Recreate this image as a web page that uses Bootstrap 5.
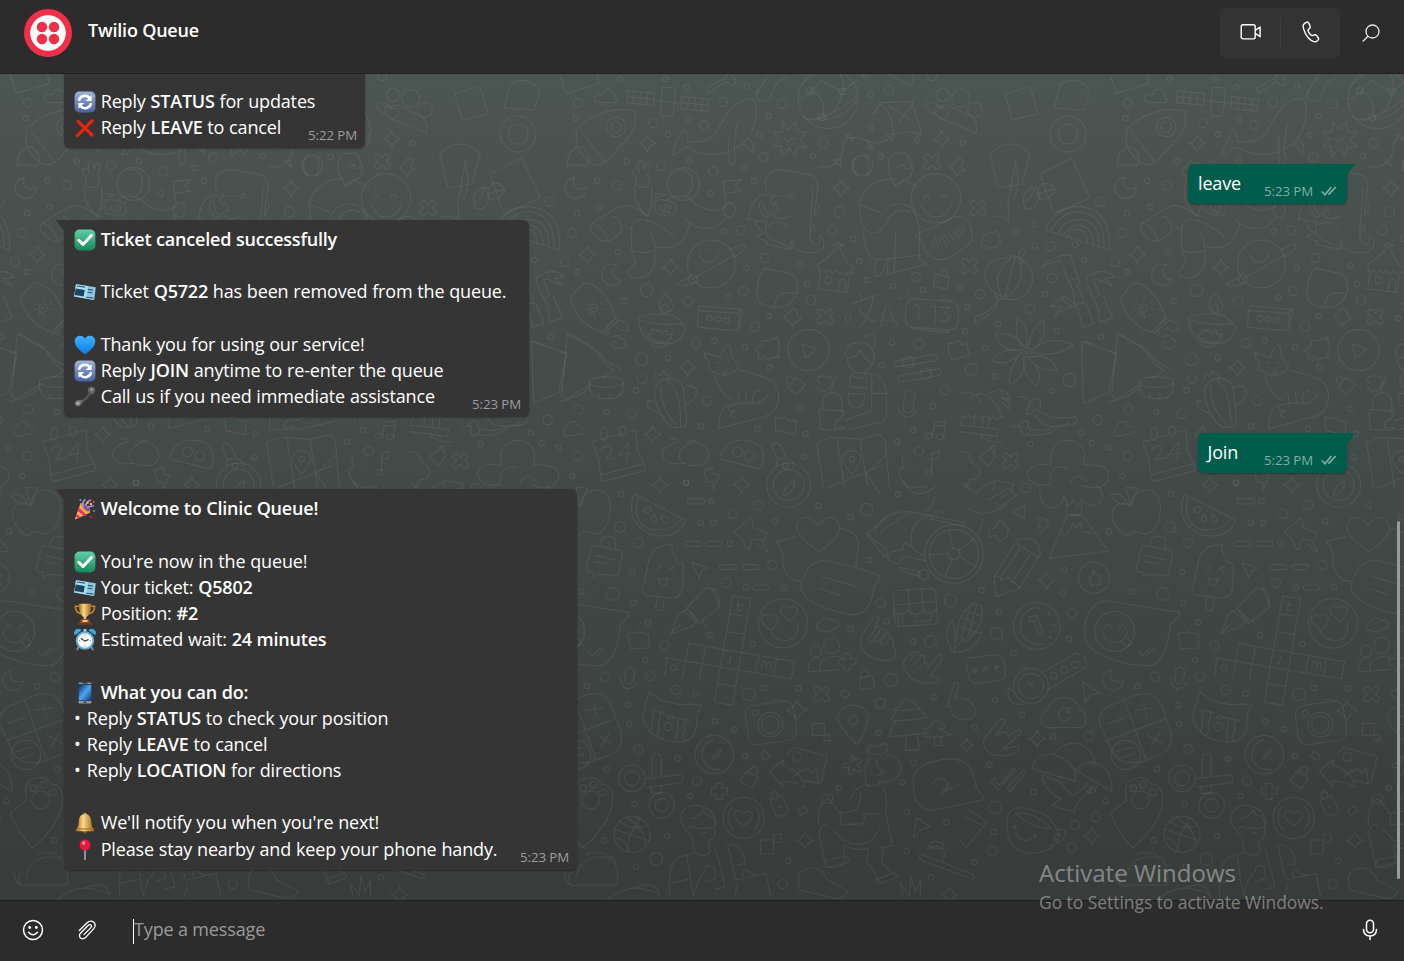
<!DOCTYPE html>
<html lang="en">
<head>
<meta charset="utf-8">
<meta name="viewport" content="width=device-width, initial-scale=1">
<title>Twilio Queue</title>
<link href="https://cdn.jsdelivr.net/npm/bootstrap@5.3.0/dist/css/bootstrap.min.css" rel="stylesheet">
<style>
  body { background: #2c2c2c; color: #fff; font-family: "Open Sans", "Noto Sans", sans-serif; font-size: 18px; }
  .topbar { height: 74px; background: #2c2c2c; border-bottom: 1px solid #202020; padding: 8px 24px 0; }
  .topbar svg, .composer svg { display: block; }
  .peer { font-weight: 600; font-size: 18px; letter-spacing: -.2px; line-height: 24px; margin: 10px 0 0 16px; }
  .calls { width: 120px; height: 50px; background: #333; border-radius: 6px; border: 1px solid #363636; }
  .calls > span { width: 59px; height: 30px; }
  .calls > span + span { border-left: 1px solid #3e3e3e; }
  .calls svg { margin: -2px 0 0 1px; }
  .find { margin: 16px 0 0 22px; }
  .defs { width: 0; height: 0; }
  .chat { min-height: 0; background: linear-gradient(#4b5551 0, #49524e 12%, #454d4a 35%, #414946 55%, #3c423f 78%, #383c3b 100%); }
  .wallpaper { inset: 0; width: 100%; height: 100%; fill: none; stroke: #fff; stroke-opacity: .07; stroke-width: 3.5; stroke-linecap: round; stroke-linejoin: round; }
  .thread { padding: 0 57px 30.2px 64px; gap: 15.8px; }
  .bubble { background: #353535; border-radius: 6px; padding: 6px 8px 8px 10px; line-height: 26.2px; letter-spacing: -.15px; word-spacing: .3px; white-space: nowrap; box-shadow: 0 1px 2px rgba(0,0,0,.3); flex: none; }
  .bubble b { font-weight: 600; letter-spacing: -.21px; }
  .bubble p { margin: 0; height: 26.2px; }
  .bubble p svg { width: 22px; height: 22px; vertical-align: -5px; margin: 0 4.700px 0 0; overflow: visible; }
  .dot { margin-right: 1.400px; }
  .stamp { right: 8px; bottom: 4px; font-size: 13.3px; line-height: 18px; letter-spacing: -.1px; word-spacing: 0; color: #9c9c9c; }
  .tail::before { content: ""; position: absolute; left: -8px; top: 0; width: 14px; height: 12px; background: inherit; clip-path: polygon(0 0, 100% 0, 100% 100%, 8px 11px); }
  .mine { background: #005c4b; align-self: flex-end; }
  .mine::before { left: auto; right: -8px; clip-path: polygon(0 0, 100% 0, 6px 11px, 0 100%); }
  .mine .stamp { color: #80ada5; right: 10px; }
  .w-a { width: 301px; } .w-b { width: 159px; } .w-c { width: 465px; } .w-d { width: 149.5px; } .w-e { width: 513px; }
  .scroller { right: 4px; top: 447px; width: 3px; height: 358px; background: #9a9c9b; border-radius: 2px; }
  .composer { height: 61px; background: #2c2c2c; border-top: 1px solid #202020; padding: 0 24px 2px 22px; }
  .clip { margin-left: 34px; }
  .entry { border-left: 1px solid #fff; height: 25px; line-height: 20px; margin: 2px 0 0 36px; color: #9a9a9a; letter-spacing: -.15px; }
  .activate { left: 1039px; top: 856px; color: rgba(255,255,255,.4); line-height: 34px; font-size: 24px; white-space: nowrap; }
  .activate small { display: block; font-size: 17.5px; line-height: 25px; letter-spacing: -.06px; }
</style>
</head>
<body>
<svg class="defs position-absolute" aria-hidden="true">
  <defs>
    <linearGradient id="gBlue" x2="0" y2="1"><stop stop-color="#9fb2da"/><stop offset="1" stop-color="#4a62a4"/></linearGradient>
    <linearGradient id="gGreen" x2="0" y2="1"><stop stop-color="#5ed0a4"/><stop offset="1" stop-color="#16895b"/></linearGradient>
    <linearGradient id="gHeart" x2="0" y2="1"><stop stop-color="#41b4ff"/><stop offset="1" stop-color="#0a7ae6"/></linearGradient>
    <linearGradient id="gGold" x2="1" y2="0"><stop stop-color="#a8691a"/><stop offset=".4" stop-color="#f8d887"/><stop offset="1" stop-color="#a3651b"/></linearGradient>
    <linearGradient id="gPhone" x2="1" y2="1"><stop stop-color="#0a2c66"/><stop offset=".5" stop-color="#4ba6ef"/><stop offset="1" stop-color="#0b3a86"/></linearGradient>
    <symbol id="eSync" viewBox="0 0 22 22"><rect x=".6" y=".6" width="20.8" height="20.8" rx="4.5" fill="url(#gBlue)"/><path d="M4.9 9.8a6.2 6.2 0 0 1 10.6-3M17.1 12.2a6.2 6.2 0 0 1-10.6 3" fill="none" stroke="#fff" stroke-width="2.5"/><path d="M17.6 4.2v5.9h-5.9zM4.4 17.8v-5.9h5.9z" fill="#fff"/></symbol>
    <symbol id="eCross" viewBox="0 0 22 22"><path d="M4 4.4 18 18M18.2 3.6 3.4 18.6" stroke="#e8230f" stroke-width="3.200" stroke-linecap="round"/></symbol>
    <symbol id="eCheck" viewBox="0 0 22 22"><rect x=".6" y=".6" width="20.8" height="20.8" rx="5" fill="url(#gGreen)"/><path d="m4.8 11.2 4.2 4.3 8.6-9.3" fill="none" stroke="#fff" stroke-width="2.9" stroke-linecap="round" stroke-linejoin="round"/></symbol>
    <symbol id="eTicket" viewBox="0 0 22 22"><path d="M2 3.2 21.8 6.2 20.2 19 .2 15.6z" fill="#8cc7de"/><path d="m2 3.2 12 1.8-1.1 9.3 7.3 4.7L.2 15.6z" fill="#a9dcec"/><path d="M1.7 7.6 10.7 9 9.7 15.6.7 14.1z" fill="#1e4263"/><path d="m3 5 8 1.2M14 8.4l4.8.8M13.6 11l4.8.8M12 16l7 1.1" stroke="#2c5c7f" stroke-width="1.2"/></symbol>
    <symbol id="eHeart" viewBox="0 0 22 22"><path d="M11 20.5C5 16 .7 12.300.7 7.300.7 3.900 3.100 1.700 6 1.700c2.200 0 4 1.200 5 3.100 1-1.900 2.800-3.100 5-3.100 2.900 0 5.300 2.200 5.300 5.600C21.300 12.300 17 16 11 20.500z" fill="url(#gHeart)"/></symbol>
    <symbol id="eCall" viewBox="0 0 22 22"><path d="M4.500 17C9 16 15 10.500 17.500 4.500" fill="none" stroke="#555" stroke-width="2.600"/><path d="M1 16.300c1-2 5.500-3.700 7.500-1.300 1 1.800-1.500 4.700-4.500 5.300-2.500.4-3.900-1.700-3-4z" fill="#6d6d6d"/><path d="M13.800 2.500c1.700-2 5-2.200 6.700-.5 1.500 1.700.5 5-1.700 6.300-2.700.7-5.700-2.600-5-5.800z" fill="#646464"/><circle cx="4" cy="17.300" r="1.800" fill="#a5a5a5"/><circle cx="17.600" cy="3.500" r="1.500" fill="#999"/></symbol>
    <symbol id="eParty" viewBox="0 0 22 22"><path d="M.8 21.500 6.500 5.500c3 1 8.500 6 9.300 9.300z" fill="#f8c23a"/><path d="m5 9.500 8 7.500-2.700 1.300L3.700 13zM2.700 15.700l4.300 3.800-2.600.9-2.500-2z" fill="#ee2d72"/><ellipse cx="11.200" cy="9.800" rx="2.900" ry="6.300" transform="rotate(-45 11.200 9.800)" fill="#f0a02c"/><ellipse cx="11.700" cy="9.300" rx="1.900" ry="5" transform="rotate(-45 11.700 9.300)" fill="#7a4bb5"/><path d="M9.500 9.500C8 6 9 3 11.500 1.500M12 8c0-4 2-5 5-6M13 10c3-3 5-1 7-2.500" fill="none" stroke="#b58be0" stroke-width="1.500"/><circle cx="6.500" cy="2.200" r="1.100" fill="#39a2f2"/><circle cx="19.800" cy="3.800" r="1.100" fill="#e1418c"/><circle cx="20" cy="13" r="1.100" fill="#48b34e"/><circle cx="13.500" cy="4.700" r="1.300" fill="#ffb02e"/><circle cx="17" cy="19" r="1.100" fill="#c92464"/><circle cx="17" cy="6" r="1.200" fill="#f0c040"/></symbol>
    <symbol id="eCup" viewBox="0 0 22 22"><path d="M5.500 3.300H1.400c0 4 1.600 6.700 5.600 7.500M16.500 3.300h4.100c0 4-1.600 6.700-5.600 7.500" fill="none" stroke="#c8872f" stroke-width="1.600"/><path d="M4.800.8h12.400c0 6.700-1.200 11.500-4.900 13.200v2.500H9.700V14C6 12.300 4.800 7.500 4.800.8z" fill="url(#gGold)"/><path d="M7 16h8l1.500 4.500h-11z" fill="#8d4d20"/><path d="M8.500 17h5v2h-5z" fill="#f2c66b"/><path d="M4 20h14v1.700H4z" fill="#73391a"/></symbol>
    <symbol id="eClock" viewBox="0 0 22 22"><path d="m4.500 18-1.600 3.200M17.500 18l1.600 3.200" stroke="#789" stroke-width="2"/><path d="M1 6.200A4 4 0 0 1 7.500 1.500zM21 6.200a4 4 0 0 0-6.500-4.700z" fill="#3ba7e8"/><path d="M9.500 0h3v3h-3z" fill="#b0bcc4"/><circle cx="11" cy="11.600" r="8.300" fill="#f5f7f8" stroke="#5fb0de" stroke-width="1.900"/><path d="m6.800 9.300 4.200 2.800 3.500-1.700" fill="none" stroke="#333" stroke-width="1.100"/><path d="M11 5.600v1.200M11 16.400v1.200M5 11.600h1.200M15.800 11.600H17" stroke="#777" stroke-width=".8"/></symbol>
    <symbol id="eMobile" viewBox="0 0 22 22"><rect x="4.500" y=".5" width="13" height="21" rx="1.600" fill="#323e52"/><path d="M4.800 3h12.400v15.300H4.800z" fill="url(#gPhone)"/><path d="M4.500 2V1.500q0-1 1-1h11q1 0 1 1V2zM4.500 19h13v1.500q0 1-1 1h-11q-1 0-1-1z" fill="#8a97a8"/><path d="M8.500 1h5M9.500 20.200h3" stroke="#222" stroke-width="1"/></symbol>
    <symbol id="eBell" viewBox="0 0 22 22"><circle cx="11" cy="2" r="1.500" fill="#c48a2e"/><circle cx="11" cy="19.500" r="2" fill="#8d571c"/><path d="M11 2c4.300 0 6 3.200 6.200 7.500.2 4.300 1 6 2.800 7.700v2H2v-2c1.800-1.700 2.600-3.400 2.800-7.700C5 5.200 6.700 2 11 2z" fill="url(#gGold)"/><path d="M3 17h16" stroke="#9e681f" stroke-width="1"/></symbol>
    <symbol id="ePin" viewBox="0 0 22 22"><path d="M11 10v11" stroke="#98a2b8" stroke-width="1.700"/><circle cx="11" cy="6" r="5.500" fill="#e8173e"/><circle cx="9.700" cy="4" r="1.700" fill="#ff8b9e"/></symbol>
    <symbol id="ticks" viewBox="0 0 16 10"><path d="m.8 5.500 3.200 3.200L10.300 1M7.500 8.700 14.800 1" fill="none" stroke="currentColor" stroke-width="1.700"/></symbol>
  </defs>
</svg>

<div class="vh-100 d-flex flex-column overflow-hidden position-relative">
  <header class="topbar d-flex align-items-start flex-shrink-0">
    <svg width="48" height="50" viewBox="0 0 48 50"><circle cx="24" cy="25" r="24" fill="#f22f46"/><circle cx="24" cy="25" r="17.800" fill="#fff"/><g fill="#f22f46"><circle cx="18" cy="19" r="5.200"/><circle cx="30" cy="19" r="5.200"/><circle cx="18" cy="31" r="5.200"/><circle cx="30" cy="31" r="5.200"/></g></svg>
    <div class="peer">Twilio Queue</div>
    <div class="calls d-flex align-items-center ms-auto">
      <span class="d-flex align-items-center justify-content-center"><svg width="22" height="18" viewBox="0 0 22 18" fill="none" stroke="#fff" stroke-width="1.400"><rect x="1.200" y="1.700" width="14" height="14.200" rx="1.800"/><path d="m15.200 7.400 4.900-3.300v9.600l-4.900-3.300" stroke-linejoin="round"/></svg></span>
      <span class="d-flex align-items-center justify-content-center"><svg width="18" height="22" viewBox="0 0 18 22" fill="none" stroke="#fff" stroke-width="1.400" stroke-linejoin="round"><path d="M2.700 2.300 4.400 1.300q1.700-.7 2.500.9l1.100 2.900q.5 1.500-.6 2.500L6 8.900q-.3 1.600 2.100 4.400 1.300 1.500 2.600 1.100l1.700-.6q1.300-.4 2.200.7l1.700 2.300q.8 1.300-.3 2.300l-.9.900q-1.500 1.200-4 .3Q6.300 18 3.300 12.300.6 6.800 1.200 4.300q.4-1.300 1.500-2z"/></svg></span>
    </div>
    <div class="find"><svg width="18" height="18" viewBox="0 0 18 18" fill="none" stroke="#e8e8e8" stroke-width="1.300"><circle cx="10.500" cy="7.500" r="6.500"/><path d="m6 12.300-5.300 5.200"/></svg></div>
  </header>

  <main class="chat flex-grow-1 position-relative overflow-hidden">
    <svg class="wallpaper position-absolute" aria-hidden="true">
      <defs><g id="tile">
        <g transform="translate(0 -4) scale(.33333)">
          <path id="dotsA"/>
          <path d="M0 15 20 70 118 40 112 12M118 98q-22-6-12-20 10-10 20-2 8-26 30-14 14 10 8 20 12 8 2 16zM202 62l82 8-4 36-80-8zM201 80l81 8M222 64l-3 36M242 66l-3 36M263 68l-3 36M312 52h24q12 2 10 14l-6 60q-2 14-14 13h-14q-12-2-10-14l4-62q0-10 6-11zM284 92l80 8M365 80l82 8-5 36-79-8zM364 98l80 8M386 82l-3 36M406 84l-3 36M427 86l-3 36M50 190q-10 50 44 90 20 10 44-5l62-66q40-50 22-86-90-20-170 52-6 6-2 15zM60 180l75 97M35 243q30-30 50 10 6 25-8 36-20-10-30 0-10-12-25 2Q20 260 35 243M440 54l56-30q8-20 20-12l10 20q0 14-12 16l-14-14-56 36zM592 70l38-65M680 20q-20 10-30 20l-22 48q-4 8-14 5-18-2-24-10-2-14 4-26"/>
          <path d="M335 255q20-60 35-77 14 10 12 36 60 10 90-30 40-90 95-99 30-2 18 70-15 60-58 80-70 40-148-5-16 8-30 22zM532 160q-16 80-3 105-5 20-18 20-8-20-4-85M564 200q20 20 17 50-20-18-32-30M639 188l28-4 2-28 17 23 22-24 5 30 27 3-20 20 20 22-29 3-5 24-18-22-22 24-3-30-23-3 19-20zM675 205l7 10 24-12"/>
          <circle cx="804" cy="86" r="90"/><path d="M716 88q30-8 66-58 20 16 65 34l45-34M749 62q50 18 40 78-30 20-60 0M847 64q-6 60-60 80M790 150q70-10 100-60M725 45q50-50 90-45M847 64q10-30-10-60M740 150q80-8 150-70M940 128l24-30 92-3 28 90-10 35-12-10 18-20q-60-10-80 5-4-70-40-95l-16 30zM1014 160l46-60M990 110l70 45M775 290q60 10 75-50-8-60 80-25 30 14 60-14M856 195l24 18-10-20zM925 210l14 25-14 0zM978 195l22 17-5-20zM820 270l24 20-4-20zM980 10l75 37q8-10 5-30L1040 5"/>
          <circle cx="1149" cy="75" r="20"/><circle cx="1202" cy="85" r="27"/><circle cx="1245" cy="120" r="22"/><path d="M1130 125q15-32 48-12l60 28q18 15 10 48l-100-42q-56-30-50-46 10-12 50 10M1145 150q-30-20-20-38 14-8 20 6 14-10 22 4 4 16-22 28zM890 260a40 40 0 0 0 4 56M920 260a60 60 0 0 1 0 56"/><circle cx="907" cy="287" r="31"/>
          <circle cx="169" cy="171" r="29"/><circle cx="169" cy="171" r="16"/><path d="M45 322a32 32 0 1 0 34 30q-24 12-37-6-5-14 3-24zM155 582a32 32 0 1 0 30 48q-24-5-27-22-4-14 14-22-8-4-17-4zM228 322q-20-24 0-30l10 14-4-28q8-12 16 4l2 18 6-20q14-6 12 12l-8 24q14 14 0 34-20 8-34-5v-23M223 345q-4 60 40 95 10-30 12-60v-30M275 370l45 4"/><circle cx="370" cy="342" r="49"/><path d="M350 300q40-10 48 35 0 30-24 46M275 415q10-40 35-36M320 390q50-30 90 15 50 30 90 2M265 440q-60-50-95-25l-75 45q-14 20 20 45 16 14 34 6 20-8 38-32-8-40-30-40M95 460q30 0 50 55M190 465l22 12M215 540v-70q10-30 50-18 40 14 75 46M270 490q20 20 13 95-14 38-50 39-30 0-28-23 26-18 20-30-6-16-10-32 25 16 65 3M283 530q60 14 90-25 14-30 16-45-10-10-10-10 30 30 75 24 24-2 46-36"/><rect x="285" y="392" width="63" height="43" rx="16" transform="rotate(12 316 413)"/><path d="m304 404-6 14 14 3m4-14-4 22M322 408q16-2 10 8l-14 10 14 4M490 335l54-7-20 18 18 18-48 6M488 335l10 62"/><ellipse cx="508" cy="420" rx="18" ry="22"/>
          <circle cx="454" cy="582" r="72"/><path d="M418 552q8 26 30 26 26-5 26-28M434 538v3M448 537v3M400 626l125-72M510 540q50-25 48-14-2 14-35 36M385 624q-40 15-35 20 10 8 50-3"/><circle cx="398" cy="627" r="13"/>
          <path d="M620 365q-18-60 40-67l90 16q30 10 22 50l-10 75q18-20 14-40M640 375q40 8 65-5l-2 10-10 5-4-8M640 375q-18 20 0 30l6-8 10 24-20 8q20 30 55 8M565 450q10-80 60-75M565 450l10-4q30 16 42 4M600 395q-8 20 12 42 14 10 18-3l-12-10q-8-8-4-16l-5-12q-5-4-9-1zM620 455q-10 50 20 55l55 25M625 465q30-20 60 5M585 455q10 25 28 32l-25 14 34 14-5 8q50 10 73 15l6-30q-5 30 40 40 60 5 55-35-10-30-14-8 8 30-22 12-6-8-6-30l10-130M752 490q4-20 10-25l4 20"/>
          <path d="M773 583q40-20 60-55l-12-3q8-8 14-4l4-3 2 8q8-4 10 0l-14 4q20 50 40 60l3 22-10-8-8 10-10-10-12 8-10-10-10 8-12-10-10 8-12-10-10 8zM781 605l-8 52 88 10 8-52M834 660l4-26q10-12 18 0v30M618 595l70 15q30 10 24 55-6 24-30 40-30 14-70 0-30-14-18-60 5-40 24-50zM645 708q0-50 65-38"/><circle cx="806" cy="631" r="10"/>
          <path d="M895 402q30-80 110-75M895 402l65 25M985 305q-5-60 30-54 30-10 35 24l8 18q0 30-24 38l-30 14-18-38M1010 293l22-10 4 14 24-5M1000 340q10 20 30-10l45 20M960 442q20-40 50-40 50-3 60 45l8 28v90M900 405q-5 90 50 84 20-10 40-50 30-30 60-12M910 485q5 80 45 85l125-15M1008 480l-6 130M985 568l-5 45 120-30-25-18M950 570q-15 45 0 50 16-2 20-20l10-30"/><circle cx="1128" cy="385" r="74"/><path d="M1082 404q20 38 46 38 38-4 46-42M1090 388q8-22 18 0M1142 384q8-22 18 0M1066 495l120-55q36-5 50 40 5 30-14 48l-60 38q-24 8-44-3-22-12-28-46zM1115 515l8 16M1125 500l10 30M1134 500l12 26M1144 495l16 34M1156 492l14 30M1168 490l12 20M1178 488l8 14M1186 480l12 26M1196 475l12 22M1208 475l6 10"/>
          <path d="M32 682l40-44q60 5 95 105l-42 44q-80-30-93-105zM125 787l50-47M130 792l48-42M142 797l6-12M178 750l24 10 4 20-18 2-20-10M160 800q24-8 18 4 24 4 20 22-14 16-36 6-14-12 4-18"/><path d="M103 715q-5-8-10 2 2 12 14 8 12-12 2-20-14-8-22 6-3 18 14 22M102 685v8M78 700l6 4M74 718l6-2M84 736l4-5M104 745v-8M122 738l-4-6M132 718h-8M125 695l-5 5"/>
          <path d="M235 745q8 70 60 75 70 10 82-48-25-45-82-40-50 0-60 13zM240 750q70 20 130 10M315 670q-24 24-16 48 12 16 30 6 25-18-14-54zM310 730q-12-22 5-28 16 10 4 28M262 795l14-4q-4-12 2-14l12 8 4-8 12 12 14-8 2 14 16-4q-4 16-14 24-36 10-62-20zM270 820q20 20 50 5"/><path d="m420 707 128 12-10 55q-5 10-15 8l-105-10q-8-3-5-12l3-45zM416 722l116 8q8 3 6 12l-5 38M532 730l14-10"/><circle cx="449" cy="745" r="8"/><circle cx="474" cy="748" r="8"/><circle cx="500" cy="751" r="8"/>
          <path id="crossA"/><path d="m870 703 80-28M900 670l6 20M940 680q-10 60-40 90M895 710q14 35 50 45M960 772l16-60q3-8 9 0l26 52M968 750h32M1014 682l12 8M1020 678M1042 662l8 18"/><rect x="1037" y="690" width="158" height="86" rx="26" transform="rotate(4 1116 733)"/><path d="M1060 710q10-10 16-4v45M1094 724v2M1094 744v2M1110 712q12-10 16 0v44M1136 712h34l-18 16q20 4 14 20-12 12-32 0M1145 690q12-8 30 6M1055 768v8l110 12v-8"/>
          <path d="M0 845 10 850M22 792 5 970q5 30 40 0l45-25M22 792q10-5 45 25 55 28 70 55l50 28M22 792l78 40 35 50 28 20-38 22"/><ellipse cx="139" cy="936" rx="51" ry="16"/><path d="M88 936q-2 50 40 50h30q36-8 32-50M118 972v10M150 972v10M0 995q50-10 88-40M283 965q8-40 45-40 40 0 44 45l8 90q-5 14-40 13-50-30-57-108zM302 950q0 70 55 122M320 930q45 30 42 140M280 935l8-24 16 4 4-14 8 12 10 0 2 16M370 960q10-20 25-10 24 5 8 35l-28 25M385 945l4 5M398 942l2 8M283 1000l-14-9q-12 8-3 24l46 24M258 993l12 2"/>
          <path d="M433 848l48 15q10-40 28-37 5 30 8 40l20 20-8 12q-8 14-40 20l-45-20 4-18-6-8q-8-12-9-24zM487 906l8 10 5-12M480 880l-8-4M500 880l10-4M465 915q8 50 50 75M538 900q80 20 100 35 30 30 10 80-14 20-40 26l-132 35q0-50 20-66 50-15 90-10 24-3 40-30M505 1012q-5 16 20 10-22 14-10 18l14 4M535 975l2 25M557 968l3 30M578 995q-5-30 20-34"/>
          <circle cx="746" cy="840" r="62"/><path d="m728 822 42 15-34 28zM590 835l16-10-2-12 28-2q5-16 14-2l6-12 8 48q-16 12 0 14l-40 10q0-12-10-10l-2 12-12-4-2-20q-12-4-4-12z"/><path d="M858 860q-8-40 42-42 45 3 42 50-14 40-45 42-30-5-36-45 30 0 40-25 10 30 40 40M910 800q30-20 36 10 0 20-12 25M880 908l-2 12 30 6 5-15M780 940q-14-8-5-20 20-5 36 0 16 16-8 40-20 10-30-10M870 915v35l50 5v-45M865 970l50 2-4 30q-14 16-40 4l-6-18zM830 915l-20 55M935 912v110l-80 30M935 970h44M915 912q60-8 64 60v65l-10 18-110 25M778 1018l75 6-8 22q-30 10-20 28l30-2-10 8-65-2zM788 1018q-5-50 30-50 36 5 26 55"/>
          <path d="m1005 874 120-22q12 8 5 20l-120 18q-14-5-5-16zM1016 918l120-22q12 8 5 20l-120 20q-14-5-5-18z"/><circle cx="1045" cy="877" r="17"/><circle cx="1097" cy="911" r="17"/><path d="m1164 830 4-10 14 2 3-9 16 2 3 10 16-4 9 34-47 14q-14 0-18-39zM1036 970q10-20 30 0l-8 50q-10 18-30 0zM1012 1005q5 40 40 35l20-20M1034 1042v10"/>
          <path d="M98 1115q70-20 130-35l4 60 24 48-2 14-122 32-8-5-8-60zM122 1215l130-34M126 1078q16-12 16 10 0 24-14 22-10-8-2-32zM180 1072q16-8 18 12-4 20-16 14-8-8-2-26zM124 1142q12-20 28-12 10 8-16 40l35-8M202 1120l-26 35 38-6M206 1120l-6 52M645 1040l20 6 8-6 16 14 20-2-4 42-58-12zM11 1090q0-20 10-22 12-20 28-10l5 10q20 2 18 16-4 12-22 8-14 8-20 4-12 8-19-6z"/>
          <path d="M355 1115q-50 14-48 40 5 30 62 25M330 1105l6 4 8-6 10 8M398 1115q-45 20-40 48 10 30 70 22 30-20 10-52-18-16-40-18zM384 1112l10 5 6-8 10 5M480 1160q20-60 85-48 60 10 40 80l-10 4-110-28q-6-2-5-8z"/><circle cx="533" cy="1145" r="15"/><circle cx="569" cy="1158" r="15"/><path d="m433 1202 28-10v20l18 2-20 45v-22l-18-2zM655 1170q-30-45-10-52 20 0 32 45"/><circle cx="676" cy="1187" r="9"/><circle cx="686" cy="1245" r="66"/><circle cx="686" cy="1245" r="46"/><path d="M650 1190q-5-24 20-24 30 0 30 22M670 1278q-2-26 34-46 2 32-34 46zM770 1120q30-20 60-18l70 6 60-15 16 20 12 140M770 1120l22 140M830 1102l24 150M900 1108l22 140M974 1160l-55 50 40 60M800 1255l170-70M875 1212q-30-35-28-50 10-22 30-20 30 4 24 30-4 14-26 40z"/><circle cx="875" cy="1168" r="8"/>
          <path d="M1125 1056l32-2-6 45M1125 1056l-8 42M1122 1068l32-2"/><ellipse cx="1107" cy="1097" rx="11" ry="8"/><ellipse cx="1140" cy="1100" rx="11" ry="8"/><path d="M1115 1205V1150l22-6v18l-22 8"/><ellipse cx="1107" cy="1207" rx="10" ry="8"/><path d="M1032 1160q-8-4-6 8l5 24q-20 2-10 30 8 26 40 30l40-2"/>
        </g>
        <g transform="translate(0 406) scale(.33333)">
          <path id="dotsB"/>
          <path d="M222 42 376 120q-20 60-100 45-85-40-54-123zM234 50q-20 80 40 98 60 10 92-34M250 92q12-18 24-6-8 22-24 6zM280 102q14 14 8 24-14 0-14-10zM304 102q20 10 18 24-18 8-18-24M385 56h45q10 8 0 16h-45q-8-8 0-16zM378 184h40q10 8 0 15h-40q-12-7 0-15zM444 184h40q10 8 0 15h-40q-12-7 0-15zM484 254h40q10 8 0 15h-40q-12-7 0-15zM552 254h40q10 8 0 15h-40q-12-7 0-15zM584 315h40q10 8 0 15h-40q-12-7 0-15zM523 155l50-42 5 5v24l44 18q-2 20-20 22l-24-5-12 32q-12 0-15-25zM590 190l32 28v-10l-15-22"/>
          <path d="M776 215q-70-50-66-80 20-45 64 0 40-45 64 0 5 40-62 80zM708 170l-60 15q24 15 20 70 15 50 55 48M840 145q70 10 52 75l-5 42M735 285q20-50 70-42l95 22 62 24-20 30q-10 90-70 85-80-14-125-45-40-30-12-74zM787 290l98 29M779 326l60 20M80 260l14-55q4-10 12-8l75 14q8 4 6 15l-12 55q-2 8-12 5l-45-3-18 8-2-14-14-2q-6-5-4-15zM106 226l60 14M104 244l40 8M120 195q5-40 45-20l2 35"/>
          <circle cx="180" cy="141" r="16"/><path d="m192 154 12 10M248 325l20-90q15-45 70-40-8 20 10 36 0 20 18 18l4 10-2 65q-8 28-28 30l-80-8q-14-4-12-21zM292 354l-6 32q14 12 22 0l6-30M290 256l14 6-14 8M342 260l-14 6 14 8M292 296l36 2M298 298q-2 20 12 20 12-4 10-18M395 248l50 16-20 8-8 22zM332 462l24-60 24-15 34 30-18 22zM368 392l45 36M380 384l60-62 20 8 20 50-65 50zM454 325q24 0 24 50M430 420q-4 12 12 18M332 462l28-28"/>
          <path d="M518 348l54 8-55 320-54-10zM510 402l54 8M500 455l54 8M386 490l318 55-10 52-380-64M322 532l-8 54M386 490l-18 104M436 500l-18 104M598 525l-12 54M650 535l-10 54M472 610l54 10M535 365l-2 24q4 8 12 2M530 374l18 2M350 560q-18-12-18 4 6 14 18 0v10M512 530l-4 20q-8 4-8-4M605 565l4-22q12-2 10 20 2-20 14-16v22"/>
          <circle cx="669" cy="430" r="74"/><path d="M634 452q-40-30-28-42 12-14 24 0 10-16 24 0 4 18-20 42zM690 424q-40-30-28-38 12-16 24 0 14-14 26 0 4 14-22 38zM632 456q20 32 56 24 30-10 24-50M770 445q-4-14 12-20 14-20 32-4 20-4 22 12 0 14-18 14-18 16-36 3-8 4-12-5z"/><circle cx="768" cy="514" r="17"/><circle cx="815" cy="497" r="24"/><path d="M745 570q0-40 35-35M780 570q-8-36 50-42l25 12M745 575l95-6M852 524q10-8 18 0v12q18-4 19 8 0 12-18 12 0 18-10 16-12-2-10-16-16 0-14-12 2-10 15-8z"/>
          <path d="M203 462l10-6 15 4 6-6 14 6 16 2 4 34-6 8-50 3zM195 585q0-24 16-24 16 4 12 26-8 26-16 26-16-3-12-28zM182 590q0 34 20 36 24-2 28-20M200 628l-2 8M248 710q8-40 20-75 14 8 32 25 25 8 60 14 36-4 64 2-14 30-14 50 2 60-60 60-90-8-102-76zM275 690l38 8M340 712l50 10M278 692q6 20-4 30 8 10-2 30M300 696q4 20-6 30 8 14-4 44M358 716q-12 20-2 30-8 8-6 34M378 720q-12 20-2 30-10 10-6 30"/><circle cx="324" cy="740" r="12"/><ellipse cx="330" cy="712" rx="10" ry="5"/>
          <rect x="560" y="670" width="146" height="118" rx="26" transform="rotate(-8 631 730)"/><circle cx="631" cy="734" r="37"/><circle cx="631" cy="734" r="26"/><circle cx="586" cy="699" r="9"/><path d="M636 664q14-14 34 0M711 660q8 24 32 30-26 10-32 32-8-24-32-30 26-10 32-32zM757 730h36v36h-36zM792 764h18v18h-18zM893 795q-60-60-60-80 5-40 46-40 44 5 46 42-2 20-32 78z"/><circle cx="879" cy="721" r="13"/><path d="m945 662 15-8 15 5v20l-15 8-14-8z"/>
          <path d="M1000 690q24-10 38-36 36 22 42 32-40 8-80 4zM1010 692l-18 28q60 5 112-10l-30-24M1006 722l-20 48q80-4 112-12M1040 770l-4 42 44-4-8-40M1090 750q24-5 34-30 24 8 34 22-14 4-20 4l36 18q-30 10-84 6l24-22M1124 772l-2 26 24-2-5-26"/>
          <path d="M905 465l30-45q14-20 22-8l-14 38q10-20 20-4 16 0 14 14 16 0 14 14 14 6 8 24l8 14q0 40-50 26-70-14-52-73zM943 450l-18 30q6 8 14 2l20-30M960 455l-20 24q6 10 16 6l20-25M976 470l-16 18q4 10 14 6l16-22M1030 550q5-20 30-34 20-4 20 10 20-2 12 18 16 2 12 18l34-38q12 4 5 20l-32 42 24 10q8 10-4 12-90 10-101-58zM1070 520l-20 22M1082 530l-20 26M1096 545l-18 22M1160 680l24-70q16-10 10 10l-8 36q14-10 20 0 20 0 34 20 20 20-8 40-60 10-60-36z"/>
          <rect x="1002" y="328" width="128" height="108" rx="14" transform="rotate(-4 1066 382)"/><path d="M1002 375l128-10M1044 330l4 62M1085 328l4 62M1000 388q24 30 44 2 24 24 44 0 20 20 44-6M1012 402l4 36M1026 402l4 36M1066 404l2 22 44-4v-20"/>
          <path d="M1180 518q-40-60-2-100 14 60 2 100zM1180 518q60 0 86-60-50-6-86 60zM1192 480q-6-60 30-96 16-20 40-8 10 20 0 50-20 50-50 60M1200 410l58 24M1194 434l50 22M1212 392l50 16M1230 380l-26 96M1250 376l-26 92"/>
          <circle cx="1182" cy="222" r="88"/><circle cx="1182" cy="222" r="74"/><circle cx="1182" cy="222" r="17"/><path d="M1178 205l-10-54M1196 212l46-34M1198 228l50 34M1176 238l-20 50M1165 222l-56 2M945 155q20-60 100-60l70 12M920 162l38 50 30 25-10-30zM920 162l80-64M1050 100q-60 30-90 60M1055 200q-14-80 60-95M968 232q30-22 60-24 5-24 8-20l55 40M985 240l30 14q14-30 20-24l60 12M1020 262l60 14v14l-58-18zM1116 108l100 20-4 10-98-20zM1126 100q10-20 24 0M1030 0q30 70 95 20M1125 50q-10 40-30 45"/><circle cx="1090" cy="284" r="15"/>
          <circle cx="463" cy="824" r="58"/><path d="M462 778a46 46 0 1 0 20 90M457 832l22-24q6 0 5 5l-16 20q-12 6-11-1zM612 812l20 16-12 14-18-14zM540 905l18-32 38 20-20 32zM566 875q10-20 24-14 8 8-2 26M454 924h14v-14h18v14h16v18h-16v16h-18v-16h-14zM628 872l42-32v16q60 24 64 66-30-20-70-18l6 20zM682 822l16-16q4-4 10-2l90 24q4 3 2 10l-16 66q-3 8-12 6l-38-8M725 875l18-10 12 14 14-18 6 50M700 890l26-20"/><circle cx="712" cy="830" r="14"/><path d="M872 830l2 18-18 2q-20 6-4 14l16-4-4 14q2 16 14 6l4-14 14 10q12 2 6-12l-12-10 14-8q0-14-14-10l-10 6q4-20-8-12z"/>
          <circle cx="216" cy="895" r="40"/><circle cx="216" cy="895" r="22"/><circle cx="305" cy="976" r="38"/><circle cx="305" cy="976" r="20"/><path d="M276 890v-60q14-18 28 0v60M258 896l104-12q14 12 0 24l-100 14M274 918v22h30v-22M286 903v1"/>
          <circle cx="92" cy="960" r="27"/><circle cx="70" cy="925" r="10"/><circle cx="100" cy="914" r="10"/><circle cx="129" cy="937" r="10"/><path d="M50 960q-14-60 30-66 30-6 44 18 36 4 34 50-5 70-90 142-40-40-68-104l50-40"/><circle cx="216" cy="1063" r="54"/><path d="M165 1048l100 34M200 1012q60 40 54 80M168 1075q30 0 40 40M240 1014l-30 50-10 52M180 1025q50 30 80 10"/>
          <circle cx="551" cy="1014" r="62"/><path d="M551 1037q-40-30-24-44 16-4 24 8 12-14 24-4 12 16-24 40zM520 980a44 44 0 0 0 0 68M582 980a44 44 0 0 1 0 68M632 960l32-14 22 44q-10 20-36 18l-16-34zM636 958q-8-20 8-24 12 6 10 18M712 990l20-12 12 16-22 12zM602 1080h38v42h-38zM640 1064l22-2 2 24-22 2z"/><circle cx="659" cy="980" r="3"/>
          <path d="M395 1068q-50-45-25-75 20-24 56-14 40 14 38 45v40q-10 20-20 20l6 32q-20 20-46 0zM390 1015q24 0 40-24 4 16 24 18l14 20M380 1045l20-6q14 12 30 4 20 8 40-10l-4-14M424 1060l14-2M330 1250q-10-90 24-118l44-12M330 1210l55-12M380 1122l20 126 16-50 20-25q0-20 14-16l14 5 2 34-30 10M465 1100l30 120-30 8M498 1095q54-8 58 60M505 1100l20 95M530 1155l26-4M528 1200l90-20 14 70M532 1215l-8 35M550 1190q-8-22 10-20 14 14 32 16"/>
          <path d="M50 1215h115q12-4 8-18 4-70-60-66-54 4-64 60M40 1180q-20-10-10 34M80 1125q16-14 30-4 16-10 34 8 24 0 22 24M12 1180q5 40 40 38M140 1260q60-50 120-30 40 6 40 20M220 1225q70-30 80 25"/>
          <path d="M720 1230q-20-60 30-66 40 0 50 35l65 35q-14 30-60 16zM805 1040q-20-20-28 20l20 100q50 10 60-20M800 1140l60-12 8 18-70 16zM856 1095q30 20 70 10M850 1095l6 45M820 1050l30 30q80 40 110-40M775 1035v-30q5-40 30-50l38 50-2 26M786 970q-10-30 30-25 8 12-8 24zM835 1000l30-4q40 0 36-60M870 960q30-60 60-40M890 1033l-50 2M850 1033l58-2 10-30M965 915q20 30 12 82l20 100-40 8M908 1002h60M925 1105l-4 40q30 40 36 60M970 1105l-5 40 30 35M945 1200l60-22 6 14-55 20zM915 865q0 40 5 48 20 10 42-3M915 865l14-30M925 820q-10-35 26-20 30-20 34 5-8 16-30 20zM955 905q60 5 68-40-5-34-40-40M950 835v20l20 26-20 5M930 880l6 2"/>
          <path d="M1060 920q-8-60 60-75 80-24 110 20 14 30 20 60l24 30-10 5-130 28q-50 12-70-38zM1118 912q18-30 40-10 14 20-14 44 0-20 34-20 20-14 14-14l10 5M1070 1012l40 28-28 10-22 24zM1080 1122l160 62q10 16-10 10l-140-50q-16-8-10-22zM1100 1110q30-30 55 10l-8 30M1110 1090q14-12 40 0l-2 16-40-4zM1030 1250l-10-40 28 36 5-60 12 50 16-36v50"/>
        </g>
        <g transform="translate(400 406) scale(.33333)">
          <path id="dotsC"/>
          <path d="M240 20q-5 60 40 64 25-5 32-35l14 30 14-18 12 20 14-24q10 24 40 18 40-20 5-60M320 65v42h45V70M320 108 268 235l178-22-80-108q-30-5-46 3zM303 160q20 20 34-30l14 14 10-16 6 28 28 2M102 290l70-110q60-20 70 40l-64 106-70 24zM170 190l68 44M180 205l-60 90M210 225l-52 80M104 292q20-10 20 12 24-24 30 4 14-4 24 16"/><circle cx="402" cy="293" r="47"/><path d="m400 270 8 14 16 2-8 14 6 14-16-2-12 8-2-16-10-10 14-6zM512 80q-14-14-34-8-30 14-18 50 20 44 46 44 14-14 28-10 40 20 62-34 20-84-34-92-30 0-44 22zM498 22l34 2-20 56zM453 46q20-14 44 14l4 12q-30 4-48-26z"/>
          <path d="m156 95 40-20-4 40zM86 150l20-8 12-22q10 0 14 16l14 10-6 24-20 16-14-20-18 5zM232 118q14-10 32 4v16l-30 26M242 122l-8 18 10 4M85 60l60-36 24 22-50 34-14-12M120 55l20-12M5 10 50 40 70 20 100 5M20 82l40 20q60-8 80-30M70 115l-14 50"/>
          <circle cx="230" cy="438" r="70"/><path d="M230 382a56 56 0 1 0 20 110M206 412l22-6 22 52q-4 10-14 2l-16-40-12 4zM18 548q-4-12 10-14l80-10q20 0 24 20l4 40q0 14-14 16l-70 10q-20 0-26-20zM33 574l20-4M40 562l6 20M36 580l14-16M67 568l20-4M75 557l5 22M70 575l14-16M100 563l18-4M107 552l5 22M103 570l13-14"/>
          <circle cx="213" cy="618" r="52"/><circle cx="213" cy="618" r="38"/><path d="m202 602 10 16 8-14M250 575l98-55 30 14v28l-112 65M176 572q10-18 30-6M165 640l-20-20v30q14 30 45 22M368 605l54 36-30 2-16 26z"/><circle cx="281" cy="587" r="10"/><circle cx="313" cy="570" r="10"/><circle cx="345" cy="554" r="10"/>
          <path d="M372 460q5-90 65-98l220 35q4 4-2 12l-24 24q-10 110-60 124-80 4-160-40-36-20-39-57zM536 514l10 14 26-24M556 530l30-28"/><circle cx="464" cy="454" r="60"/><path d="M428 450q5 40 40 38 30-5 34-34M438 442q8-20 16 0M478 444q8-20 18 0M485 486l12 14q14 0 14-16l-10-10M452 570a31 31 0 1 0 38 32q-24 10-36-6-6-14-2-26zM248 735q-14-30 16-46 5-30 48-38 40 5 46 36 30 14 14 52l-14 4H262zM328 690a19 19 0 1 0 4 20M330 682v14h-14"/>
          <path d="M420 735q-8-40 30-58l50-20q80-40 105 20l28 80q10 50-35 68l-50 20q-70 14-90-30zM440 782l178-66M494 662l64 176M446 730l50-18M525 690l54-6M550 668l10 44M560 765l48 26M600 755l-28 48M468 815l50-14M478 838l44-18"/><circle cx="498" cy="825" r="44"/>
          <path d="M88 820q-30-30-10-50l40-50q20-8 18 4l-30 45 24-14q12 0 14 14l30-20q16 4 5 14l-50 44 40-8q12 6 4 16-50 22-85 5zM88 902l28 28 50-62q-5-6-8 0l-40 48-16-20zM140 926l50-56q10-2 9 5l-50 60zM216 865q10-45 60-43 80 24 70 82zM282 822q20-40 80-30 50 30 40 65M346 870q60-50 100 10 14 30 8 54zM245 880q10 60 60 76l-30 20 68 20q10-50 60-60l10-20M250 885l50 20q30 40 40 40 40-20 45-40M380 935l20-15-14 20zM25 990l56 34-50 65M0 1080l18 24 12-14M10 1008l60 30"/>
          <path d="M142 1050q-10-80 60-64 70 14 84 56l10 20q0 50-80 58-70-5-74-70zM166 1000q50-10 108 44-40 10-108-44zM292 1050q30-10 24 16-20 30-48 30M282 1084l4-18 12-6q10 5-16 24zM168 1060q20 34 46 14"/><circle cx="164" cy="1040" r="4"/><circle cx="225" cy="1067" r="4"/>
        </g>
        <g transform="translate(400 106) scale(.33333)">
          <path id="dotsD"/>
          <path d="M145 125v-60q10-60 20-110M100 108q40 0 46 18M165-60q20 80-5 120M256 150q30-75 110-70 90 14 82 130zM272 155q30-62 90-60 75 14 70 110M292 163q24-50 76-44 54 14 48 80M308 168q24-36 56-32 34 10 36 58M320 172q10-26 36-24 24 5 27 42"/>
          <path d="M196 85q-20-50 28-65 26 20 2 60-14 12-30 5zM195 65q24-10 28-44M236 55q-10-30 14-44 30-5 34 24-20 30-48 20zM240 40q20-8 40-12M70 165l12 2 4-12 12 4 8-6 12 14-4 10 10 10-10 8-4 8-14-4-8 8-12-10-14-2 4-12z"/>
          <path d="M102 338q-50-50-10-90 40-22 84-14 50 24 40 80-24 50-72 44zM150 235q-60 50-25 112M165 235q-20 70-30 115M178 240q20 70-36 112M150 240q0-20 20-10 30 10 12 20M175 230l5-20q16-5 16 4l-14 24M105 336q20 22 38 10v10q-30 5-40-10zM114 355l-6 20q8 14-62 55V410q40-10 60-38"/>
          <path d="M242 264q40-40 90-40l22 70-30 8-22-60-34 8zM324 302q20 30 20 70M354 294q8 20-4 20l24 55-30 4M344 373q20 30 22 70l36-14-24-56M344 373q-20-20-38-24 0 20 34 30-40 10-54 30 0-14 20-28l-34-2q30-20 40-30M380 290l28-12q34-10 55 14l-32 4q20 10 26 20-30-10-44-20l-12 4 18 46-20 8-20-50zM398 352q20 20 20 75l40-14-28-65"/>
          <circle cx="200" cy="517" r="14"/><circle cx="200" cy="517" r="4"/><path d="M185 500q-24-40-12-90 40 40 24 90M205 500q10-60 45-80 14 50-30 90M216 510q60-50 124-14-60 40-124 20M212 530q60-10 80 42-60 0-85-38M205 534q50 40 25 86-50-40-35-88M190 532q10 60-40 82-10-40 30-90M184 520q-40 40-86 24 20-40 80-34M184 510q-60 10-78-48 60-8 86 38"/>
          <path d="M0 640q60-10 60 30M30 655q50-40 90 40l10 20-8-5-10 10-14-10-10 8-14-10-12 8-12-10-14 8-10-8-16 6M10 706l-10 30M45 706l-4 30M70 710l-4 30M90 712l-4 30M0 735l116 14-4 20-112-14M65 760v14M90 765v12M60 770q40 20 66 15M85 640q40-20 55 0l12 20-30-8q40 20 24 35-14-20-30-24M120 625l10 20"/>
          <path d="M175 650q20-5 36 20-14 20-8 34l14-4 10-14q50 40 120 24 10 20-10 24-90 20-110-30M211 670l10-14 20 4v24M155 742q10-8 30-2-8 20 5 26 20-4 20-14l-8-14q12-20-14-14-8 10-14 12M208 745q50 14 80-6 40-4 40-12M205 765q60 5 85-20"/>
          <path d="M270 855q-60-8-68 28 10 40 70 30M274 860q-14-70 46-80 70 8 50 75 80-5 76 35-10 50-80 26M320 862q-50-10-50 45M330 910q20-40 50-5M92 800q-10 20-8 10l-28 20 28 28 22-28zM92 802q10-10 14 0l-4 20M0 815q30 0 30 24l30 30q0 30-30 30l-14 24M100 930l5-30 55 12-4 18"/>
          <path d="M365 484l106 36-26 118-70 30q-6-2-5-10zM365 484q20 0 40 14l60 20"/>
        </g>
        <g><path d="M445 20 470 12 478 40 452 46zM500 10q20-10 30 8l-6 18-30-2zM430 80q20-20 40 0l-8 30-24 4zM490 60a18 18 0 1 0 36 0 18 18 0 1 0-36 0M498 60a10 10 0 1 0 20 0 10 10 0 1 0-20 0M480 100l14 40 36-16-18-40z" stroke-width="1.100"/></g>
      </g></defs>
      <use href="#tile" x="-540"/><use href="#tile" x="10"/><use href="#tile" x="560"/><use href="#tile" x="1110"/>
    </svg>

    <div class="thread position-relative h-100 d-flex flex-column justify-content-end align-items-start">
      <div class="bubble position-relative w-a">
        <p>&nbsp;</p>
        <p><svg><use href="#eSync"/></svg>Reply <b>STATUS</b> for updates</p>
        <p><svg><use href="#eCross"/></svg>Reply <b>LEAVE</b> to cancel</p>
        <span class="stamp position-absolute">5:22 PM</span>
      </div>
      <div class="bubble position-relative tail mine w-b">
        <p>leave</p>
        <span class="stamp position-absolute d-flex align-items-center gap-2">5:23 PM <svg width="16" height="10"><use href="#ticks"/></svg></span>
      </div>
      <div class="bubble position-relative tail w-c">
        <p><svg><use href="#eCheck"/></svg><b>Ticket canceled successfully</b></p>
        <p>&nbsp;</p>
        <p><svg><use href="#eTicket"/></svg>Ticket <b>Q5722</b> has been removed from the queue.</p>
        <p>&nbsp;</p>
        <p><svg><use href="#eHeart"/></svg>Thank you for using our service!</p>
        <p><svg><use href="#eSync"/></svg>Reply <b>JOIN</b> anytime to re-enter the queue</p>
        <p><svg><use href="#eCall"/></svg>Call us if you need immediate assistance</p>
        <span class="stamp position-absolute">5:23 PM</span>
      </div>
      <div class="bubble position-relative tail mine w-d">
        <p>Join</p>
        <span class="stamp position-absolute d-flex align-items-center gap-2">5:23 PM <svg width="16" height="10"><use href="#ticks"/></svg></span>
      </div>
      <div class="bubble position-relative tail w-e">
        <p><svg><use href="#eParty"/></svg><b>Welcome to Clinic Queue!</b></p>
        <p>&nbsp;</p>
        <p><svg><use href="#eCheck"/></svg>You're now in the queue!</p>
        <p><svg><use href="#eTicket"/></svg>Your ticket: <b>Q5802</b></p>
        <p><svg><use href="#eCup"/></svg>Position: <b>#2</b></p>
        <p><svg><use href="#eClock"/></svg>Estimated wait: <b>24 minutes</b></p>
        <p>&nbsp;</p>
        <p><svg><use href="#eMobile"/></svg><b>What you can do:</b></p>
        <p><span class="dot">•</span> Reply <b>STATUS</b> to check your position</p>
        <p><span class="dot">•</span> Reply <b>LEAVE</b> to cancel</p>
        <p><span class="dot">•</span> Reply <b>LOCATION</b> for directions</p>
        <p>&nbsp;</p>
        <p><svg><use href="#eBell"/></svg>We'll notify you when you're next!</p>
        <p><svg><use href="#ePin"/></svg>Please stay nearby and keep your phone handy.</p>
        <span class="stamp position-absolute">5:23 PM</span>
      </div>
    </div>
    <div class="scroller position-absolute"></div>
  </main>

  <footer class="composer d-flex align-items-center flex-shrink-0">
    <svg width="22" height="22" viewBox="0 0 22 22" fill="none" stroke="#fff" stroke-width="1.500"><circle cx="11" cy="11" r="9.500"/><path d="M6.500 13.200q4.500 5 9 0" stroke-linecap="round"/><g fill="#fff" stroke="none"><circle cx="7.700" cy="8.500" r="1.400"/><circle cx="14.300" cy="8.500" r="1.400"/></g></svg>
    <svg class="clip" width="19" height="20" viewBox="0 0 19 20" fill="none" stroke="#fff" stroke-width="1.300" stroke-linecap="round"><path d="M1.300 10.500 8.600 3.200q3.600-3.400 7-1.200 3 3 .2 6.600l-8.300 9q-2.600 2.200-5 .4-2-2.200 0-4.800l7.800-8q1.600-1.200 2.700-.2 1 1.200-.2 2.600L6 14.600"/></svg>
    <div class="entry flex-grow-1">Type a message</div>
    <svg width="20" height="22" viewBox="0 0 20 22" fill="none" stroke="#fff" stroke-width="1.500" stroke-linecap="round"><rect x="6.500" y="1.300" width="7" height="12.500" rx="3.500"/><path d="M3.500 10.500q.3 6.500 6.500 6.500t6.500-6.500M10 17v3.500"/></svg>
  </footer>

  <div class="activate position-absolute">Activate Windows<small>Go to Settings to activate Windows.</small></div>
</div>

<script src="https://cdn.jsdelivr.net/npm/bootstrap@5.3.0/dist/js/bootstrap.bundle.min.js"></script>
<script>
  // Small scattered motifs of the wallpaper: circles, sparkles and plump crosses.
  const ring = ([x, y, r]) => `M${x - r} ${y}a${r} ${r} 0 1 0 ${2 * r} 0a${r} ${r} 0 1 0 ${-2 * r} 0`;
  const star = ([x, y, r = 25]) => { const k = r * .25; return `M${x} ${y - r}Q${x + k} ${y - k} ${x + r} ${y}Q${x + k} ${y + k} ${x} ${y + r}Q${x - k} ${y + k} ${x - r} ${y}Q${x - k} ${y - k} ${x} ${y - r}z`; };
  const cross = ([x, y]) => `M${x} ${y - 9}l10-13q12 0 12 12l-10 10l12 11q0 12-12 12l-12-12l-12 12q-12 0-12-12l12-11l-12-11q2-12 14-11z`;
  const put = (id, s) => document.getElementById(id).setAttribute('d', s);
  put('dotsA', [[180,28,8],[316,28,8],[380,52,8],[561,47,8],[53,99,13],[47,144,8],[489,96,14],[667,101,14],[386,149,8],[432,164,13],[279,159,14],[324,193,8],[626,138,8],[599,196,8],[790,220,14],[610,262,14],[758,257,8],[200,274,8],[303,287,14],[387,272,8],[460,304,14],[553,294,8],[581,333,8],[112,332,8],[171,346,14],[452,371,8],[119,411,8],[51,430,8],[36,489,13],[491,484,8],[543,481,14],[15,575,14],[174,545,8],[51,606,8],[260,661,19],[192,693,8],[384,694,14],[550,663,14],[504,682,8],[559,593,8],[616,564,14],[720,586,8],[741,643,8],[753,689,14],[626,738,8],[585,770,14],[463,812,8],[408,819,14],[555,831,8],[245,868,19],[323,863,8],[246,926,14],[229,961,8],[442,992,14],[55,1018,14],[139,1026,8],[215,1031,14],[423,1069,8],[593,1077,8],[737,1092,8],[719,1016,8],[733,1161,8],[52,1158,14],[37,1219,8],[378,1238,8],[629,892,8],[838,425,16],[817,481,14],[879,507,8],[897,574,8],[920,630,8],[998,647,8],[1069,622,14],[1088,660,8],[1200,651,8],[1223,711,8],[864,744,8],[996,818,8],[1077,822,14],[965,885,8],[1154,961,14],[1118,1008,8],[1059,1080,8],[1011,1116,8],[1076,1144,14],[1215,784,8],[1234,898,18],[933,74,8],[987,60,14],[933,173,8],[1208,220,8],[962,260,8],[1117,18,14],[914,16,8],[749,62,10],[847,64,10],[787,142,10]].map(ring).join('') + [[262,220],[332,592],[383,893],[278,1093],[1145,207],[843,355],[82,554,26]].map(star).join(''));
  put('crossA', [[796,740],[1228,588],[1116,274]].map(cross).join('') + 'M672 740l20-16 4-10 16 8v18l12 6-20 12-6 10-10-10zM1168 290l18-12 4-14 20 6-6 22 12 8-18 6-6 12-8-12zM1126 610l42 14-8 34-40-10zM1142 610q8-20 20-4v16M708 922l28 22-26 30-26-22zM684 940q-12-20 4-22l14 10');
  put('dotsB', [[183,43,8],[378,8,8],[455,64,8],[595,76,14],[518,101,14],[422,128,8],[460,128,8],[235,188,14],[510,191,8],[646,124,8],[775,77,8],[871,112,8],[920,89,19],[1014,42,8],[216,277,8],[65,335,8],[159,342,19],[220,368,8],[637,255,14],[499,308,14],[558,322,8],[672,322,8],[928,240,8],[962,369,14],[1172,361,19],[264,427,8],[313,496,14],[449,465,8],[577,493,8],[871,448,8],[980,424,8],[1058,486,8],[1111,484,18],[256,541,8],[271,589,14],[134,591,14],[82,618,8],[347,630,14],[407,641,8],[612,624,8],[567,643,19],[715,625,8],[993,600,19],[205,675,8],[208,731,8],[465,724,8],[523,748,8],[956,758,8],[1121,651,8],[1243,742,8],[235,808,14],[353,836,8],[141,867,8],[411,902,14],[391,948,8],[555,828,8],[223,971,8],[321,1068,8],[132,1081,8],[289,1137,19],[227,1160,8],[685,1142,8],[668,1213,14],[837,924,8],[1060,848,8],[1027,907,8],[1040,995,8],[1159,1027,8],[1040,1114,8],[1113,1192,8],[1243,1147,8]].map(ring).join('') + [[300,15],[545,15],[735,1082],[1168,1245],[1220,795,20]].map(star).join('') + cross([784,642]) + 'M898 595l38-8 8 36-40 6zM904 592q-4-20 12-22 14 4 10 18M840 640l16-12 14 16-16 12z');
  put('dotsC', [[197,24,14],[447,154,8],[313,270,8],[310,339,8],[65,331,8],[117,395,8],[336,400,14],[327,477,8],[161,520,8],[106,661,8],[186,704,8],[279,769,8],[387,768,14],[89,854,8],[221,936,8],[106,982,19],[407,1011,14],[438,962,8],[345,1035,14],[102,1056,8],[335,1102,14],[97,1114,14],[110,460,18],[236,385,3],[266,400,3],[281,435,3],[270,471,3]].map(ring).join('') + [[260,302],[231,776],[395,1068]].map(star).join('') + 'M122 473l10 10');
  put('dotsD', [[419,65,14],[223,133,8],[167,156,8],[224,197,8],[272,199,14],[346,194,8],[373,241,8],[276,295,14],[60,343,14],[255,343,8],[210,387,14],[114,432,8],[290,452,8],[423,470,8],[76,503,8],[104,589,8],[328,600,19],[277,632,8],[413,720,14],[363,758,8],[211,791,8],[395,790,8],[446,803,8]].map(ring).join('') + [[54,84],[152,842]].map(cross).join(''));
</script>
</body>
</html>
